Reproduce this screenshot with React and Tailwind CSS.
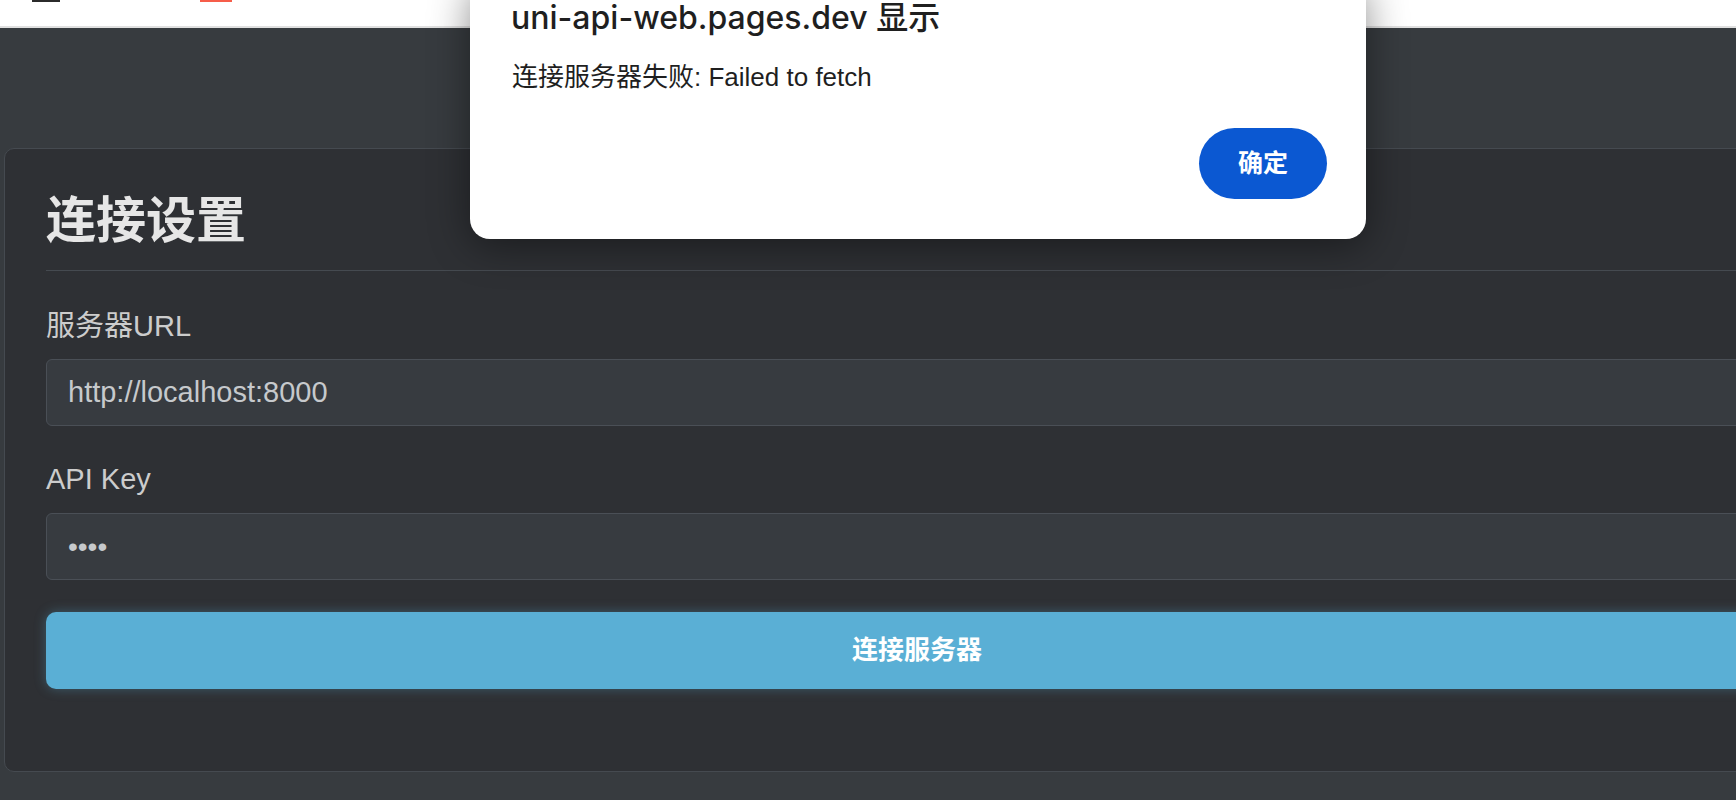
export default function App() {
  const sans = "font-['Liberation_Sans','Noto_Sans_CJK_SC',sans-serif]";
  return (
    <div className={`relative w-full h-[800px] overflow-hidden bg-[#373b3f] ${sans}`}>
      {/* top white browser/page bar */}
      <div className="h-[28px] bg-white border-b-2 border-[#e0e0e0] flex items-start">
        <div className="ml-[32px] w-[28px] h-[2px] bg-[#2b2b2b]" />
        <div className="ml-[140px] w-[32px] h-[2px] bg-[#f65d4a]" />
      </div>

      {/* page content */}
      <div className="pt-[120px]">
        <div className="ml-[4px] w-[1826px] shrink-0 rounded-[10px] border border-[#454a50] bg-[#2e3034] px-[41px] pt-[43px] pb-[82px]">
          <h2 className="text-[50px] leading-[58px] font-bold text-[#e6e6e6] pb-[20px] border-b border-[#454a50]">
            连接设置
          </h2>

          <div className="mt-[34px] text-[29px] leading-[42px] text-[#cccccc]">服务器URL</div>
          <div className="mt-[12px] h-[67px] rounded-[6px] border border-[#4a4f56] bg-[#373b40] flex items-center pl-[21px] text-[29px] text-[#c6c9cc]">
            http://localhost:8000
          </div>

          <div className="mt-[32px] text-[29px] leading-[42px] text-[#cccccc]">API Key</div>
          <div className="mt-[13px] h-[67px] rounded-[6px] border border-[#4a4f56] bg-[#373b40] flex items-center pl-[21px] text-[28px] text-[#c6c9cc]">
            ••••
          </div>

          <button className="mt-[32px] w-full h-[77px] rounded-[10px] bg-[#5aafd5] text-white text-[26px] font-bold shadow-[0_0_12px_rgba(91,176,213,0.35)] flex items-center justify-center">
            连接服务器
          </button>
        </div>
      </div>

      {/* alert dialog */}
      <div className="absolute top-[-20px] left-[470px] w-[896px] rounded-[20px] bg-white shadow-[0_6px_40px_rgba(0,0,0,0.45)] pt-[20px] pb-[40px]">
        <div className="pl-[41px] text-[32px] leading-[36px] font-medium text-[#1f1f1f] font-['Inter','Noto_Sans_CJK_SC',sans-serif]">
          uni-api-web.pages.dev 显示
        </div>
        <div className="pl-[42px] mt-[24px] text-[26px] leading-[34px] text-[#1f1f1f]">
          连接服务器失败: Failed to fetch
        </div>
        <div className="mt-[34px] flex justify-end pr-[39px]">
          <button className="w-[128px] h-[71px] rounded-full bg-[#0b58d2] text-white text-[25px] font-bold flex items-center justify-center">
            确定
          </button>
        </div>
      </div>
    </div>
  );
}
